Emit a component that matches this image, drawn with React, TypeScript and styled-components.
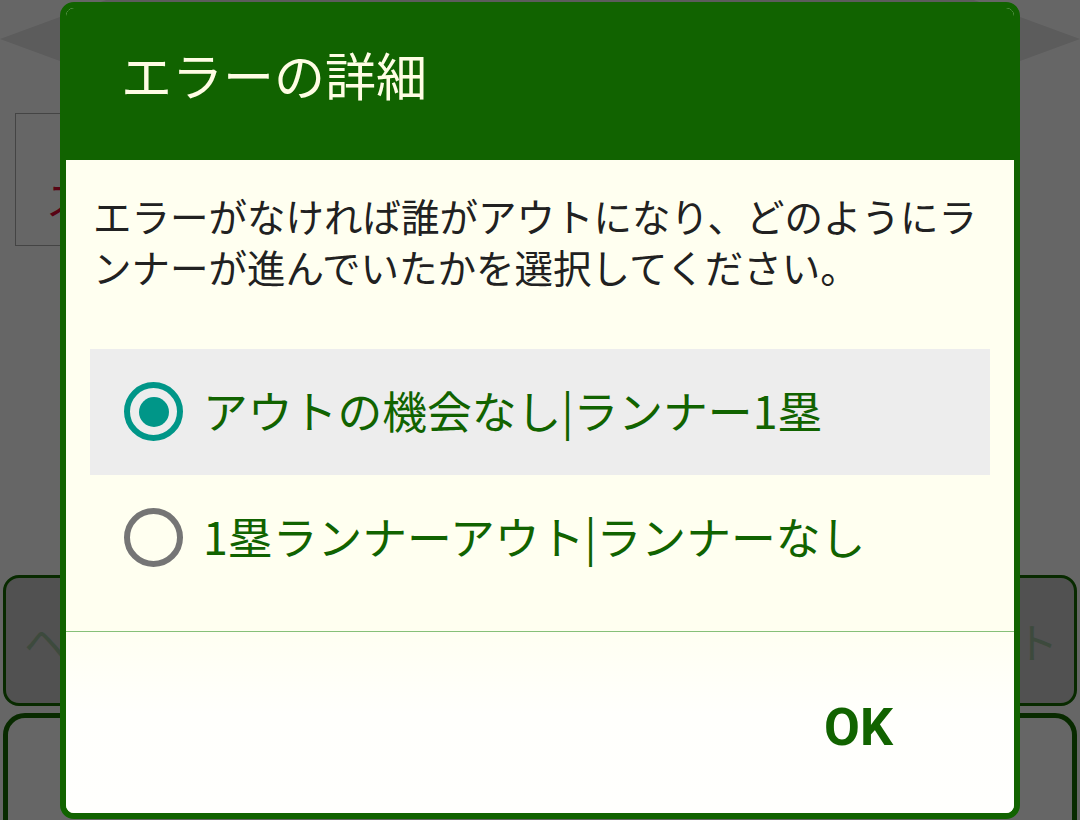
import React, { useState } from "react";
import styled, { createGlobalStyle } from "styled-components";

const GlobalStyle = createGlobalStyle`
  html, body {
    margin: 0;
    padding: 0;
    background: #ffffff;
    overflow: hidden;
  }
  body {
    font-family: "Noto Sans CJK JP", "Noto Sans", sans-serif;
  }
`;

const options = [
  "アウトの機会なし|ランナー1塁",
  "1塁ランナーアウト|ランナーなし",
];

export default function App() {
  const [selected, setSelected] = useState(0);

  return (
    <>
      <GlobalStyle />
      <Page>
        <Banner viewBox="0 0 1080 80" preserveAspectRatio="none">
          <polygon points="0,39 106,0 974,0 1080,39 974,78 106,78" fill="#e6e6e6" />
        </Banner>
        <InfoBox>
          <InfoText>ス</InfoText>
        </InfoBox>
        <ButtonRow>
          <GameButton $align="flex-start">ヘッド</GameButton>
          <GameButton $align="flex-end">アウト</GameButton>
        </ButtonRow>
        <BigButton />
      </Page>

      <Overlay>
        <Dialog>
          <Header>
            <Title>エラーの詳細</Title>
          </Header>
          <Body>
            <Message>
              エラーがなければ誰がアウトになり、どのようにランナーが進んでいたかを選択してください。
            </Message>
            <OptionList>
              {options.map((label, i) => (
                <Option key={label} $checked={selected === i} onClick={() => setSelected(i)}>
                  <Radio $checked={selected === i} />
                  <OptionLabel>{label}</OptionLabel>
                </Option>
              ))}
            </OptionList>
          </Body>
          <Footer>
            <OkButton type="button">OK</OkButton>
          </Footer>
        </Dialog>
      </Overlay>
    </>
  );
}

/* underlying screen (dimmed by the overlay) */

const Page = styled.div`
  width: 1080px;
  height: 820px;
  display: flex;
  flex-direction: column;
  background: #ffffff;
  overflow: hidden;

  & > * {
    flex-shrink: 0;
  }
`;

const Banner = styled.svg`
  display: block;
  width: 1080px;
  height: 80px;
`;

const InfoBox = styled.div`
  margin: 33px 0 0 15px;
  width: 600px;
  height: 133px;
  border: 1px solid #aaaaaa;
  display: flex;
  align-items: flex-end;
  padding: 0 0 18px 30px;
  box-sizing: border-box;
`;

const InfoText = styled.span`
  font-size: 40px;
  color: #dc0a32;
`;

const ButtonRow = styled.div`
  margin-top: 329px;
  display: grid;
  grid-template-columns: 1fr 1fr;
  gap: 40px;
  padding: 0 3px;
  height: 131px;
`;

const GameButton = styled.div<{ $align: string }>`
  border: 3px solid #156a00;
  border-radius: 16px;
  background: #cacaca;
  display: flex;
  align-items: center;
  justify-content: ${(p) => p.$align};
  padding: 0 16px 0 18px;
  font-size: 42px;
  color: #98b898;
  overflow: hidden;
  white-space: nowrap;
`;

const BigButton = styled.div`
  margin: 7px 3px 0;
  height: 150px;
  border: 5px solid #156a00;
  border-radius: 22px;
  background: #ffffff;
`;

/* dialog */

const Overlay = styled.div`
  position: fixed;
  inset: 0;
  background: rgba(0, 0, 0, 0.6);
  display: flex;
  align-items: center;
  justify-content: center;
`;

const Dialog = styled.div`
  width: 960px;
  box-sizing: border-box;
  border: 6px solid #116300;
  border-radius: 14px;
  overflow: hidden;
  display: flex;
  flex-direction: column;
  background: #fffff0;
`;

const Header = styled.div`
  height: 152px;
  background: #116300;
  display: flex;
  align-items: center;
  padding: 0 0 18px 55px;
  box-sizing: border-box;
`;

const Title = styled.h1`
  margin: 0;
  font-size: 51px;
  font-weight: 400;
  line-height: 1;
  color: #fffde4;
`;

const Body = styled.div`
  background: #fffff0;
  padding: 30px 24px 30px;
  border-bottom: 1px solid #86c078;
`;

const Message = styled.p`
  margin: 0 3px;
  font-size: 38.5px;
  line-height: 51px;
  color: #212121;
`;

const OptionList = styled.div`
  margin-top: 57px;
  display: flex;
  flex-direction: column;
`;

const Option = styled.div<{ $checked: boolean }>`
  height: 126px;
  display: flex;
  align-items: center;
  gap: 20px;
  padding-left: 34px;
  background: ${(p) => (p.$checked ? "#ededed" : "transparent")};
  cursor: pointer;
`;

const Radio = styled.span<{ $checked: boolean }>`
  width: 59px;
  height: 59px;
  box-sizing: border-box;
  border-radius: 50%;
  border: 6px solid ${(p) => (p.$checked ? "#009688" : "#757575")};
  display: flex;
  align-items: center;
  justify-content: center;
  flex-shrink: 0;

  &::after {
    content: "";
    width: 30px;
    height: 30px;
    border-radius: 50%;
    background: ${(p) => (p.$checked ? "#009688" : "transparent")};
  }
`;

const OptionLabel = styled.span`
  font-size: 44.8px;
  line-height: 1;
  color: #116300;
  margin-top: -3px;
`;

const Footer = styled.div`
  height: 181px;
  box-sizing: border-box;
  background: linear-gradient(#fffff2, #fffffc 45%, #fffffd);
  display: flex;
  justify-content: flex-end;
  align-items: flex-start;
  padding: 54px 105px 0 0;
`;

const OkButton = styled.button`
  border: none;
  background: transparent;
  padding: 16px;
  font-family: Roboto, "Liberation Sans", sans-serif;
  font-size: 52px;
  font-weight: 700;
  line-height: 1;
  color: #116300;
  cursor: pointer;
`;
